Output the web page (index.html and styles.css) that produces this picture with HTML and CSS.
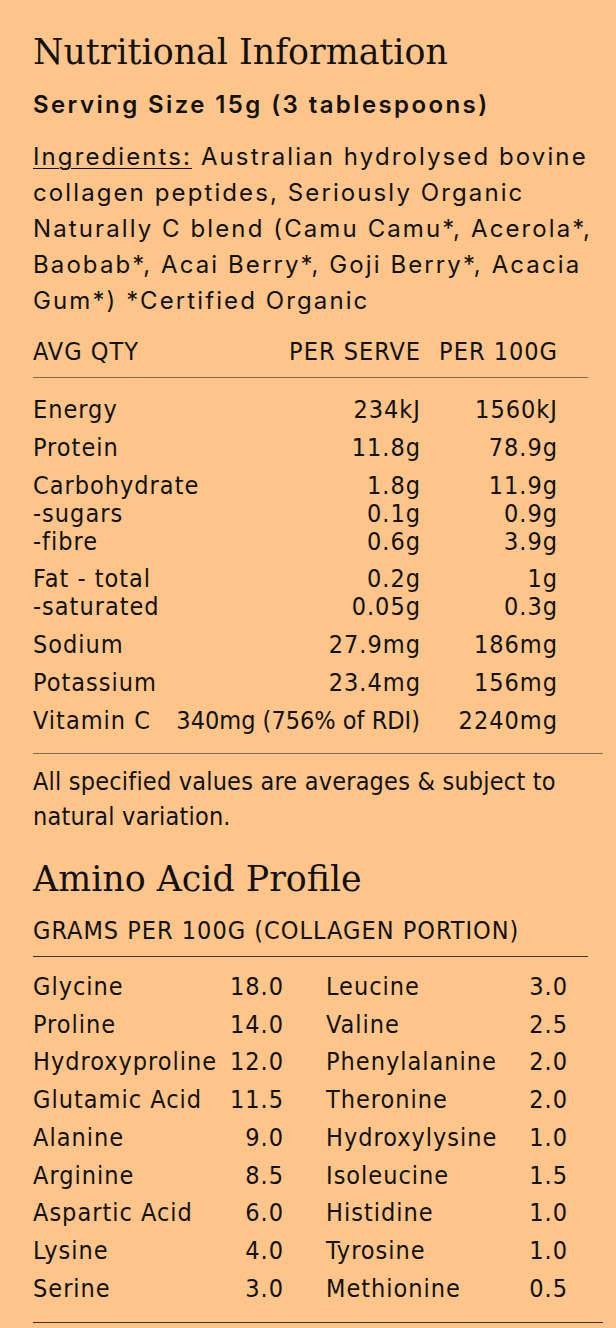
FILE: index.html
```html
<!DOCTYPE html>
<html lang="en">
  <head>
    <title>Nutritional Information</title>
    <meta charset="UTF-8" />
    <meta name="viewport" content="width=device-width, initial-scale=1.0" />
    <link rel="stylesheet" href="styles.css">
  </head>

  <body>
    <main class="panel">
      <h1 class="title">Nutritional Information</h1>
      <p class="serving">Serving Size 15g (3 tablespoons)</p>
      <p class="ingredients">
        <span class="label">Ingredients:</span> Australian hydrolysed bovine
        collagen peptides, Seriously Organic Naturally C blend (Camu Camu*,
        Acerola*, Baobab*, Acai Berry*, Goji Berry*, Acacia Gum*) *Certified Organic
      </p>

      <div class="nutri-head">
        <span>AVG QTY</span>
        <span class="num">PER SERVE</span>
        <span class="num">PER 100G</span>
      </div>

      <div class="nutri-body">
        <div class="group">
          <span>Energy</span><span class="num">234kJ</span><span class="num">1560kJ</span>
        </div>
        <div class="group">
          <span>Protein</span><span class="num">11.8g</span><span class="num">78.9g</span>
        </div>
        <div class="group">
          <span>Carbohydrate</span><span class="num">1.8g</span><span class="num">11.9g</span>
          <span>-sugars</span><span class="num">0.1g</span><span class="num">0.9g</span>
          <span>-fibre</span><span class="num">0.6g</span><span class="num">3.9g</span>
        </div>
        <div class="group">
          <span>Fat - total</span><span class="num">0.2g</span><span class="num">1g</span>
          <span>-saturated</span><span class="num">0.05g</span><span class="num">0.3g</span>
        </div>
        <div class="group">
          <span>Sodium</span><span class="num">27.9mg</span><span class="num">186mg</span>
        </div>
        <div class="group">
          <span>Potassium</span><span class="num">23.4mg</span><span class="num">156mg</span>
        </div>
        <div class="group">
          <span>Vitamin C</span><span class="num tight">340mg (756% of RDI)</span><span class="num">2240mg</span>
        </div>
      </div>

      <p class="note">All specified values are averages &amp; subject to natural variation.</p>

      <h2 class="title">Amino Acid Profile</h2>
      <div class="amino-head">GRAMS PER 100G (COLLAGEN PORTION)</div>

      <div class="amino">
        <div class="aa"><span>Glycine</span><span>18.0</span></div>
        <div class="aa"><span>Leucine</span><span>3.0</span></div>
        <div class="aa"><span>Proline</span><span>14.0</span></div>
        <div class="aa"><span>Valine</span><span>2.5</span></div>
        <div class="aa"><span>Hydroxyproline</span><span>12.0</span></div>
        <div class="aa"><span>Phenylalanine</span><span>2.0</span></div>
        <div class="aa"><span>Glutamic Acid</span><span>11.5</span></div>
        <div class="aa"><span>Theronine</span><span>2.0</span></div>
        <div class="aa"><span>Alanine</span><span>9.0</span></div>
        <div class="aa"><span>Hydroxylysine</span><span>1.0</span></div>
        <div class="aa"><span>Arginine</span><span>8.5</span></div>
        <div class="aa"><span>Isoleucine</span><span>1.5</span></div>
        <div class="aa"><span>Aspartic Acid</span><span>6.0</span></div>
        <div class="aa"><span>Histidine</span><span>1.0</span></div>
        <div class="aa"><span>Lysine</span><span>4.0</span></div>
        <div class="aa"><span>Tyrosine</span><span>1.0</span></div>
        <div class="aa"><span>Serine</span><span>3.0</span></div>
        <div class="aa"><span>Methionine</span><span>0.5</span></div>
      </div>
    </main>
  </body>
</html>
```

FILE: styles.css
```css
body {
  margin: 0;
  background-color: #fec58a;
  color: #111;
  font-family: Inter, "Noto Sans", sans-serif;
}

.panel {
  padding: 30px 13px 6px 33px;
}

.title {
  font-family: "DejaVu Serif", serif;
  font-weight: 400;
  font-size: 34.8px;
  line-height: 44px;
  margin: 0;
}

.serving {
  font-size: 24px;
  font-weight: 600;
  letter-spacing: 2.4px;
  line-height: 30px;
  margin: 16px 0 0;
}

.ingredients {
  font-size: 24px;
  letter-spacing: 2.1px;
  line-height: 36px;
  margin: 19px 0 0;
}

.label {
  text-decoration: underline;
  text-decoration-thickness: 1px;
  text-underline-offset: 3px;
}

.nutri-head,
.nutri-body,
.note,
.amino-head,
.amino {
  font-family: "DejaVu Sans Condensed", "DejaVu Sans", sans-serif;
  font-stretch: condensed;
  font-size: 25px;
  letter-spacing: 1px;
}

.nutri-head {
  display: grid;
  grid-template-columns: minmax(0, 1fr) 250px 137px;
  margin: 15px 15px 0 0;
  padding: 0 31px 7px 0;
  border-bottom: 1px solid #7d6e5e;
  line-height: 36px;
}

.num {
  text-align: right;
  white-space: nowrap;
  margin-right: -1px;
}

.num.tight {
  letter-spacing: 0;
  margin-right: 0;
}

.nutri-body {
  display: flex;
  flex-direction: column;
  gap: 9.8px;
  margin-top: 18px;
  padding: 0 46px 18px 0;
  border-bottom: 1px solid #7d6e5e;
}

.group {
  display: grid;
  grid-template-columns: minmax(0, 1fr) 250px 137px;
  line-height: 28px;
}

.note {
  letter-spacing: 0.2px;
  line-height: 35px;
  margin: 10px 30px 0 0;
}

h2.title {
  margin-top: 23px;
}

.amino-head {
  line-height: 36px;
  margin: 12px 15px 0 0;
  padding-bottom: 7px;
  border-bottom: 1px solid #3c332b;
}

.amino {
  display: grid;
  grid-template-columns: 250px 241px;
  column-gap: 43px;
  margin-top: 11px;
  padding-bottom: 14px;
  border-bottom: 1px solid #3c332b;
  line-height: 37.75px;
}

.aa {
  display: flex;
  justify-content: space-between;
}

.aa span:last-child {
  margin-right: -1px;
}
```
